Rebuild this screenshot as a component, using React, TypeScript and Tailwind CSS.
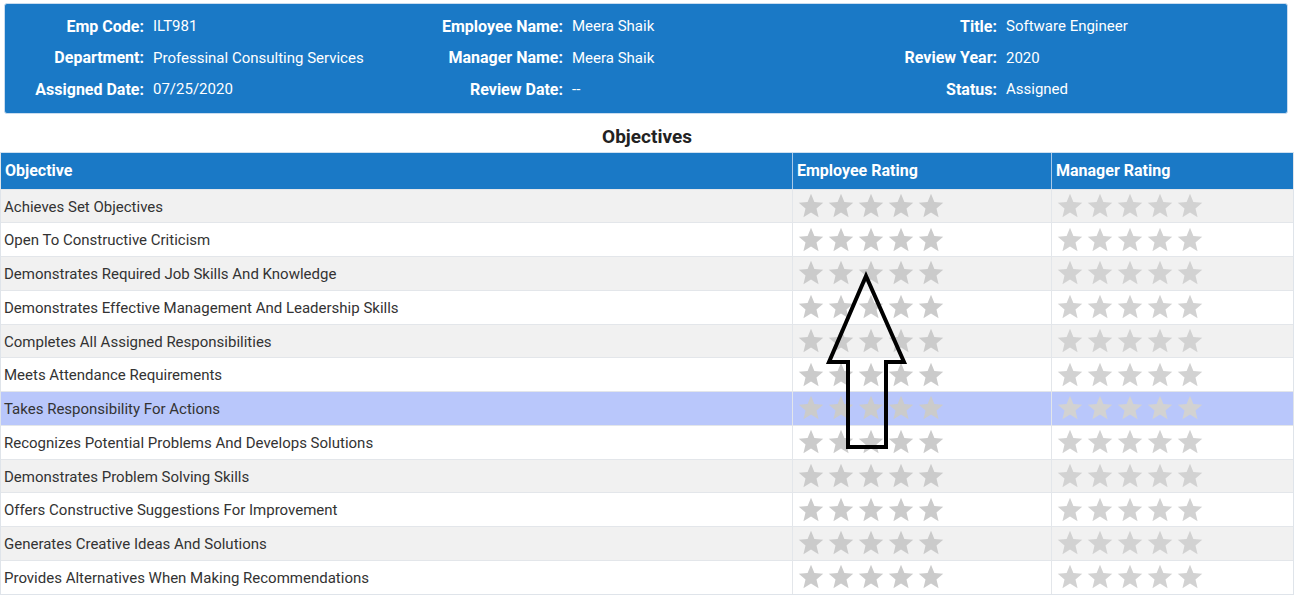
import React from "react"

const objectives = [
  "Achieves Set Objectives",
  "Open To Constructive Criticism",
  "Demonstrates Required Job Skills And Knowledge",
  "Demonstrates Effective Management And Leadership Skills",
  "Completes All Assigned Responsibilities",
  "Meets Attendance Requirements",
  "Takes Responsibility For Actions",
  "Recognizes Potential Problems And Develops Solutions",
  "Demonstrates Problem Solving Skills",
  "Offers Constructive Suggestions For Improvement",
  "Generates Creative Ideas And Solutions",
  "Provides Alternatives When Making Recommendations",
]

const Star = ({ color }: { color: string }) => (
  <svg width="28" height="28" viewBox="0 0 24 24" className="shrink-0">
    <polygon
      fill={color}
      points="12,1.5 14.9,8.6 22.5,9.2 16.7,14.1 18.5,21.6 12,17.6 5.5,21.6 7.3,14.1 1.5,9.2 9.1,8.6"
    />
  </svg>
)

const Stars = ({ color }: { color: string }) => (
  <div className="flex items-center gap-[2px] pl-[4px]">
    {[0, 1, 2, 3, 4].map((i) => (
      <Star key={i} color={color} />
    ))}
  </div>
)

const Field = ({ label, value, labelW }: { label: string; value: string; labelW: string }) => (
  <div className="flex h-[31.5px] items-center leading-none">
    <span className={`${labelW} text-right text-[16px] font-bold shrink-0`}>{label}</span>
    <span className="pl-[9px] text-[15px]">{value}</span>
  </div>
)

export default function App() {
  return (
    <div className="relative w-[1300px] bg-white text-[15px] text-[#333]" style={{ fontFamily: "Roboto, 'Liberation Sans', sans-serif" }}>
      {/* employee info panel */}
      <div className="ml-[4px] mt-[3px] w-[1284px] rounded-[3px] border border-[#c9dcef] bg-[#1a79c6] pt-[7px] pb-[7px] text-white flex">
        <div className="w-[416px]">
          <Field label="Emp Code:" value="ILT981" labelW="w-[139px]" />
          <Field label="Department:" value="Professinal Consulting Services" labelW="w-[139px]" />
          <Field label="Assigned Date:" value="07/25/2020" labelW="w-[139px]" />
        </div>
        <div className="w-[430px]">
          <Field label="Employee Name:" value="Meera Shaik" labelW="w-[142px]" />
          <Field label="Manager Name:" value="Meera Shaik" labelW="w-[142px]" />
          <Field label="Review Date:" value="--" labelW="w-[142px]" />
        </div>
        <div className="flex-1">
          <Field label="Title:" value="Software Engineer" labelW="w-[146px]" />
          <Field label="Review Year:" value="2020" labelW="w-[146px]" />
          <Field label="Status:" value="Assigned" labelW="w-[146px]" />
        </div>
      </div>

      <div className="pt-[12px] pb-[4px] text-center text-[19px] font-bold leading-[22px] text-[#222]">
        <span className="pr-[6px]">Objectives</span>
      </div>

      {/* objectives table */}
      <div className="w-[1294px] border border-t-[#cfe0f0] border-x-[#dfe4ea] border-b-[#dfe4ea]">
        <div className="flex h-[36px] items-center bg-[#1a79c6] text-[16px] font-bold text-white">
          <div className="w-[791px] pl-[4px]">Objective</div>
          <div className="flex h-full w-[259px] items-center border-l border-[#a9c9e8] pl-[4px]">Employee Rating</div>
          <div className="flex h-full flex-1 items-center border-l border-[#a9c9e8] pl-[4px]">Manager Rating</div>
        </div>
        {objectives.map((o, i) => {
          const bg = i === 6 ? "bg-[#b9c7fb]" : i % 2 === 0 ? "bg-[#f1f1f1]" : "bg-white"
          return (
            <div key={o} className={`flex h-[33.75px] items-center border-t border-[#e3e6ea] ${bg}`}>
              <div className="w-[791px] pl-[3px] pt-[2px]">{o}</div>
              <div className="flex h-full w-[259px] items-center border-l border-[#e3e6ea]">
                <Stars color="#cbcbcb" />
              </div>
              <div className="flex h-full flex-1 items-center border-l border-[#e3e6ea]">
                <Stars color="#d2d2d2" />
              </div>
            </div>
          )
        })}
      </div>

      {/* annotation arrow drawn over the table */}
      <svg className="absolute left-[824px] top-[268px]" width="86" height="182" viewBox="0 0 86 182">
        <polygon
          points="42,5 5,91 24,91 24,176 62,176 62,91 80,91"
          fill="none"
          stroke="#000"
          strokeWidth="4"
          strokeLinejoin="miter"
        />
      </svg>
    </div>
  )
}
